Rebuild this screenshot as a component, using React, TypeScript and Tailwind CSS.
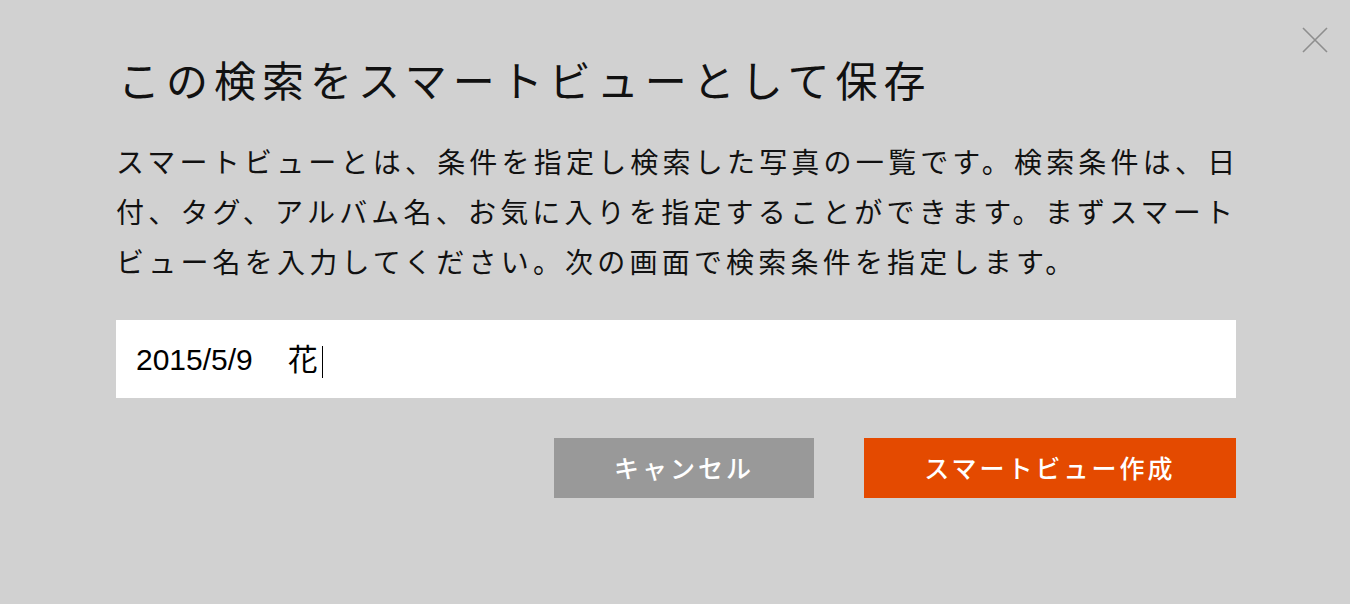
import React from "react";

export default function App() {
  return (
    <div
      className="relative w-full h-[604px] bg-[#d1d1d1] text-[#111111] overflow-hidden"
      style={{ fontFamily: '"Noto Sans CJK JP", "Noto Sans", sans-serif' }}
    >
      <button className="absolute left-[1302px] top-[27px] w-[26px] h-[26px]" aria-label="close">
        <svg width="26" height="26" viewBox="0 0 26 26">
          <path d="M1 1 L25 25 M25 1 L1 25" stroke="#8e8e8e" strokeWidth="1.6" fill="none" />
        </svg>
      </button>

      <div className="flex flex-col pl-[116px] pt-[49px] w-[1300px]">
        <h1 className="text-[42px] leading-[60px] tracking-[6px] font-normal pl-[2px] whitespace-nowrap">
          この検索をスマートビューとして保存
        </h1>

        <p className="mt-[27px] text-[28px] leading-[50px] tracking-[4.2px] whitespace-nowrap">
          スマートビューとは、条件を指定し検索した写真の一覧です。検索条件は、日
          <br />
          付、タグ、アルバム名、お気に入りを指定することができます。まずスマート
          <br />
          ビュー名を入力してください。次の画面で検索条件を指定します。
        </p>

        <div
          className="mt-[34px] w-[1120px] h-[78px] bg-white flex items-center pl-[20px] text-[30px] text-black"
          style={{ fontFamily: '"Liberation Sans", "Noto Sans CJK JP", sans-serif' }}
        >
          <span className="whitespace-pre">2015/5/9</span>
          <span className="whitespace-pre ml-[5px]">　花</span>
          <span className="inline-block w-[1.5px] h-[32px] bg-black ml-[4px] mt-[6px]" />
        </div>

        <div className="mt-[40px] w-[1120px] flex justify-end gap-[50px]">
          <button className="w-[260px] h-[60px] bg-[#999999] text-white text-[25px] font-medium tracking-[3px] flex items-center justify-center">
            キャンセル
          </button>
          <button className="w-[372px] h-[60px] bg-[#e44a00] text-white text-[25px] font-medium tracking-[3px] flex items-center justify-center">
            スマートビュー作成
          </button>
        </div>
      </div>
    </div>
  );
}
